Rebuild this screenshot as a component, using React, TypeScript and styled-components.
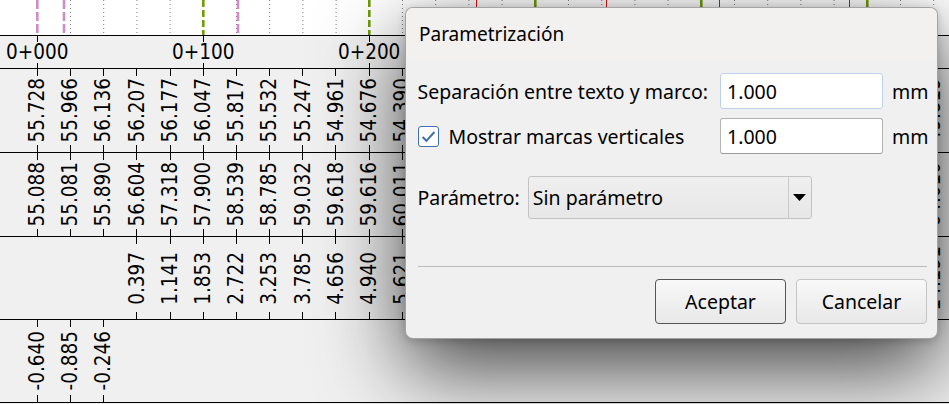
import styled, { createGlobalStyle } from 'styled-components';

const GlobalStyle = createGlobalStyle`
  html, body {
    margin: 0;
    padding: 0;
    background: #f0f0f0;
  }
  body {
    overflow: hidden;
  }
`;

const COL = 33.2;
const FIRST = 37.3;
const COLUMNS = 28;

const TERRAIN = [
  55.728, 55.966, 56.136, 56.207, 56.177, 56.047, 55.817, 55.532, 55.247, 54.961, 54.676, 54.39,
  54.104, 53.818, 53.533, 53.247, 52.961, 52.676, 52.39, 52.104, 51.819, 51.533, 51.247, 50.962,
  50.676, 50.39, 50.105, 49.819,
];

const GRADE = [
  55.088, 55.081, 55.89, 56.604, 57.318, 57.9, 58.539, 58.785, 59.032, 59.618, 59.616, 60.011,
  60.402, 60.815, 61.12, 61.377, 61.704, 61.982, 62.217, 62.504, 62.731, 62.91, 63.118, 63.342,
  63.507, 63.688, 63.843, 64.01,
];

// cut values as printed by the program (rounded from the full precision levels)
const CUT = [
  null, null, null, '0.397', '1.141', '1.853', '2.722', '3.253', '3.785', '4.656', '4.940', '5.621',
  '6.298', '6.997', '7.587', '8.130', '8.743', '9.306', '9.827', '10.400', '10.912', '11.377',
  '11.871', '12.380', '12.831', '13.298', '13.738', '14.191',
];

const FILL = GRADE.map((g, i) => {
  const d = Math.round((g - TERRAIN[i]) * 1000) / 1000;
  return d < 0 ? d.toFixed(3) : null;
});

const ROWS: { h: number; values: (string | null)[] }[] = [
  { h: 83, values: TERRAIN.map((v) => v.toFixed(3)) },
  { h: 83, values: GRADE.map((v) => v.toFixed(3)) },
  { h: 82, values: CUT },
  { h: 82, values: FILL },
];

const PINK_MARKS = [37.3, 64, 238];
const RED_MARKS = [476, 606, 719, 849];

const Stage = styled.div`
  position: relative;
  width: 949px;
  height: 404px;
  overflow: hidden;
  background: #f0f0f0;
`;

const Profile = styled.div`
  display: flex;
  flex-direction: column;
`;

const Sky = styled.div`
  height: 35px;
  background: #ffffff;
  border-bottom: 1px solid #000;

  svg {
    display: block;
  }
`;

const Band = styled.div<{ $h: number }>`
  display: flex;
  height: ${(p) => p.$h}px;
  padding-left: ${FIRST - COL / 2}px;
  border-bottom: 1px solid #000;
`;

const Slot = styled.div`
  flex: 0 0 ${COL}px;
  min-width: 0;
  display: flex;
  flex-direction: column;
  align-items: center;
  justify-content: space-between;
`;

const Tick = styled.span<{ $len?: number }>`
  flex-shrink: 0;
  width: 1px;
  height: ${(p) => p.$len ?? 7}px;
  background: #000;
`;

const Station = styled.span`
  font-family: 'DejaVu Sans Condensed', 'DejaVu Sans', sans-serif;
  font-stretch: condensed;
  font-size: 20.5px;
  line-height: 1;
  color: #000;
  white-space: nowrap;
`;

const Value = styled.span`
  writing-mode: vertical-rl;
  transform: rotate(180deg);
  font-family: 'DejaVu Sans Condensed', 'DejaVu Sans', sans-serif;
  font-stretch: condensed;
  font-size: 20.5px;
  line-height: 1;
  color: #000;
  white-space: nowrap;
`;

const Dialog = styled.div`
  position: absolute;
  z-index: 2;
  left: 405px;
  top: 7px;
  width: 533px;
  height: 332px;
  box-sizing: border-box;
  border: 1px solid rgba(0, 0, 0, 0.32);
  border-radius: 8px;
  overflow: hidden;
  background: #f0f0f0;
  box-shadow: 0 2px 10px rgba(0, 0, 0, 0.18), 0 30px 84px rgba(0, 0, 0, 0.72);
  font-family: 'Noto Sans', 'Open Sans', sans-serif;
  font-size: 19.5px;
  color: #000;
`;

const TitleBar = styled.div`
  display: flex;
  align-items: center;
  height: 52px;
  padding-left: 13px;
  background: #f3f1f0;
  font-size: 19px;
`;

const Body = styled.div`
  display: flex;
  flex-direction: column;
  padding: 13px 10px 0 11.5px;
`;

const FieldRow = styled.div<{ $gap?: number }>`
  display: flex;
  align-items: center;
  height: 36px;
  margin-top: ${(p) => p.$gap ?? 0}px;
`;

const Label = styled.label`
  flex: 1;
  display: flex;
  align-items: center;
  gap: 10px;
  white-space: nowrap;
`;

const TextBox = styled.input<{ $focus?: boolean }>`
  width: 163px;
  height: 36px;
  box-sizing: border-box;
  padding: 0 6px;
  border: 1px solid ${(p) => (p.$focus ? '#bcd0e8' : '#b4b4b4')};
  border-bottom-color: ${(p) => (p.$focus ? '#bcd0e8' : '#9a9a9a')};
  border-radius: 3px;
  background: #fff;
  font: inherit;
  color: #000;
  outline: none;
`;

const Unit = styled.span`
  width: 35px;
  margin-left: 9px;
`;

const CheckBox = styled.span`
  display: inline-flex;
  align-items: center;
  justify-content: center;
  width: 21px;
  height: 21px;
  box-sizing: border-box;
  border: 1px solid #3f6fb2;
  border-radius: 3px;
  background: #fff;
`;

const ComboRow = styled.div`
  display: flex;
  align-items: center;
  gap: 8px;
  margin-top: 21.5px;
`;

const Combo = styled.div`
  display: flex;
  width: 284px;
  height: 43px;
  box-sizing: border-box;
  border: 1px solid #c3c3c3;
  border-radius: 3px;
  background: linear-gradient(#efefef, #e7e7e7);
`;

const ComboText = styled.span`
  flex: 1;
  display: flex;
  align-items: center;
  padding-left: 4px;
`;

const ComboArrow = styled.span`
  display: flex;
  align-items: center;
  justify-content: center;
  width: 22px;
  border-left: 1px solid #cbcbcb;
`;

const Separator = styled.div`
  height: 1px;
  margin-top: 47px;
  background: #b9b9b9;
`;

const Buttons = styled.div`
  display: flex;
  justify-content: flex-end;
  gap: 10px;
  margin-top: 12.5px;
`;

const Button = styled.button<{ $default?: boolean }>`
  width: 131px;
  height: 45px;
  box-sizing: border-box;
  border: 1px solid ${(p) => (p.$default ? '#555555' : '#c4c4c4')};
  border-radius: 4px;
  background: linear-gradient(#f8f8f8, #e8e8e8);
  font: inherit;
  color: #000;
  padding: 0;
`;

const SkyLines = () => {
  const grid = Array.from({ length: COLUMNS }, (_, i) => FIRST + COL * i);
  return (
    <svg width={949} height={35}>
      {grid.map((x, i) =>
        i % 5 === 0 ? null : (
          <line key={`g${i}`} x1={x} x2={x} y1={0} y2={35} stroke="#808080" strokeWidth={1} strokeDasharray="1 3" />
        ),
      )}
      {grid
        .filter((_, i) => i % 5 === 0 && i > 0)
        .map((x) => (
          <line key={`s${x}`} x1={x} x2={x} y1={0} y2={35} stroke="#6e9d06" strokeWidth={2.6} strokeDasharray="7 3" />
        ))}
      {PINK_MARKS.map((x) => (
        <line key={`p${x}`} x1={x} x2={x} y1={0} y2={35} stroke="#d28bc6" strokeWidth={2.6} strokeDasharray="9 3" />
      ))}
      {RED_MARKS.map((x) => (
        <line key={`r${x}`} x1={x + 0.5} x2={x + 0.5} y1={0} y2={35} stroke="#e01010" strokeWidth={1} />
      ))}
    </svg>
  );
};

const App = () => {
  return (
    <>
      <GlobalStyle />
      <Stage>
        <Profile>
          <Sky>
            <SkyLines />
          </Sky>
          <Band $h={32}>
            {Array.from({ length: COLUMNS }, (_, i) =>
              i % 5 === 0 ? (
                <Slot key={i}>
                  <Tick $len={6} />
                  {/* labels further right sit under the dialog */}
                  {i <= 10 && <Station>{`0+${String(i * 20).padStart(3, '0')}`}</Station>}
                  <Tick $len={6} />
                </Slot>
              ) : (
                <Slot key={i} />
              ),
            )}
          </Band>
          {ROWS.map((row, r) => (
            <Band key={r} $h={row.h}>
              {row.values.map((v, i) =>
                v ? (
                  <Slot key={i}>
                    <Tick />
                    <Value>{v}</Value>
                    <Tick />
                  </Slot>
                ) : (
                  <Slot key={i} />
                ),
              )}
            </Band>
          ))}
        </Profile>

        <Dialog role="dialog" aria-label="Parametrización">
          <TitleBar>Parametrización</TitleBar>
          <Body>
            <FieldRow>
              <Label>Separación entre texto y marco:</Label>
              <TextBox $focus defaultValue="1.000" />
              <Unit>mm</Unit>
            </FieldRow>
            <FieldRow $gap={9}>
              <Label>
                <CheckBox>
                  <svg width="15" height="13" viewBox="0 0 15 13">
                    <path d="M1.6 7 L5.4 10.8 L13.4 2" fill="none" stroke="#3f6fb2" strokeWidth="2" />
                  </svg>
                </CheckBox>
                Mostrar marcas verticales
              </Label>
              <TextBox defaultValue="1.000" />
              <Unit>mm</Unit>
            </FieldRow>
            <ComboRow>
              <span>Parámetro:</span>
              <Combo>
                <ComboText>Sin parámetro</ComboText>
                <ComboArrow>
                  <svg width="13" height="7" viewBox="0 0 13 7">
                    <path d="M0 0 H13 L6.5 7 Z" fill="#000" />
                  </svg>
                </ComboArrow>
              </Combo>
            </ComboRow>
            <Separator />
            <Buttons>
              <Button $default>Aceptar</Button>
              <Button>Cancelar</Button>
            </Buttons>
          </Body>
        </Dialog>
      </Stage>
    </>
  );
};

export default App;
